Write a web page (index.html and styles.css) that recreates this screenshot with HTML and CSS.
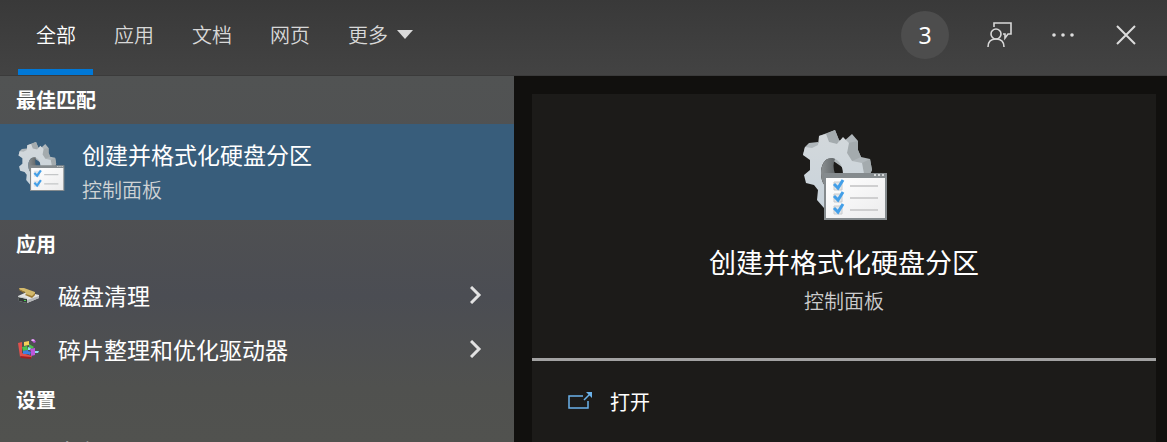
FILE: index.html
```html
<!DOCTYPE html>
<html lang="zh-CN">

<head>
    <meta charset="UTF-8">
    <meta name="viewport" content="width=device-width, initial-scale=1.0">
    <title>搜索</title>
    <link rel="stylesheet" href="styles.css">
</head>

<body>
    <!-- shared gear + checklist icon -->
    <svg class="sprite" aria-hidden="true">
        <defs>
            <linearGradient id="gearFace" x1="0" y1="0" x2="0" y2="1">
                <stop offset="0" stop-color="#d3d8db" />
                <stop offset="1" stop-color="#c8d3db" />
            </linearGradient>
            <linearGradient id="gearHole" x1="0" y1="0" x2="1" y2="0">
                <stop offset="0" stop-color="#8b9092" />
                <stop offset="1" stop-color="#5f6466" />
            </linearGradient>
            <linearGradient id="paper" x1="0" y1="0" x2="1" y2="1">
                <stop offset="0" stop-color="#ffffff" />
                <stop offset="1" stop-color="#ececed" />
            </linearGradient>
        </defs>
        <symbol id="gear" viewBox="0 0 88 92">
            <path fill="#b0b7bb" d="M17 6L33 0L37 10L41 12L50 4L56 11L56 20L59 27L68 29L70 40L68 44H50L30 30L1 25L3 17L7 13L16 12L18 15Z" />
            <path fill="#a4abae" d="M24 4L33 0L37 10L35 14L27 12ZM46 13L56 11L56 20L45 23ZM50 31L59 27L56 20L45 23ZM60 33L68 29L70 40L68 44H62Z" />
            <path fill="url(#gearFace)" fill-rule="evenodd" d="M17 6L24 4L27 12L35 14L41 7L47 13L45 23L50 31L60 33L62 44V60H40V80L22 78L15 70L16 60L12 55L4 53L2 45L8 40V30L1 25L3 17L10 18L16 15ZM29 28C23 28 19 35 19 43C19 53 24 59 30 59C37 59 41 52 41 44C41 35 36 28 29 28Z" />
            <path fill="url(#gearHole)" d="M29 28C23 28 19 35 19 43C19 53 24 59 30 59C37 59 34 52 33 44C31 38 31 33 33 29C32 28 31 28 29 28Z" />
            <path fill="#858b8e" d="M22 43H85V90H22Z" />
            <path fill="url(#paper)" d="M24 48H83V88H24Z" />
            <path fill="#d7dadb" d="M72 44h2v2h-2zM76 44h2v2h-2zM80 44h2v2h-2z" />
        </symbol>
    </svg>

    <div class="search">
        <header class="topbar">
            <nav class="tabs">
                <button class="tab active">全部</button>
                <button class="tab">应用</button>
                <button class="tab">文档</button>
                <button class="tab">网页</button>
                <button class="tab">更多
                    <svg width="16" height="9" viewBox="0 0 16 9"><path fill="#dadada" d="M0 0H16L8 9Z" /></svg>
                </button>
            </nav>
            <div class="actions">
                <button class="points">3</button>
                <button class="action" aria-label="反馈">
                    <svg width="26" height="26" viewBox="0 0 26 26" fill="none" stroke="#d8d8d8" stroke-width="1.6">
                        <path d="M7 5V1H24V12H21L18 16V12H16" />
                        <circle cx="9" cy="12" r="5" />
                        <path d="M1 25C1 20 4 17 9 17S17 20 17 25" />
                    </svg>
                </button>
                <button class="action" aria-label="选项">
                    <svg width="24" height="24" viewBox="0 0 24 24" fill="#dcdcdc">
                        <circle cx="3" cy="12" r="1.8" />
                        <circle cx="12" cy="12" r="1.8" />
                        <circle cx="21" cy="12" r="1.8" />
                    </svg>
                </button>
                <button class="action" aria-label="关闭">
                    <svg width="22" height="22" viewBox="0 0 22 22" fill="none" stroke="#dcdcdc" stroke-width="2"><path d="M2 2L20 20M20 2L2 20" /></svg>
                </button>
            </div>
        </header>

        <main class="content">
            <section class="results">
                <h2 class="group">最佳匹配</h2>
                <button class="best">
                    <svg class="best-icon" viewBox="0 0 88 92">
                        <use href="#gear" width="88" height="92" />
                        <path fill="#e0e4e7" d="M29 53h11v11h-11zM29 71h11v11h-11z" />
                        <path fill="none" stroke="#439fe8" stroke-width="4" d="M30 57L35 62L42 52M30 75L35 80L42 70" />
                        <path stroke="#c4c6c8" stroke-width="2" d="M48 60H74M48 77H74" />
                    </svg>
                    <span class="best-text">
                        <span class="name">创建并格式化硬盘分区</span>
                        <span class="kind">控制面板</span>
                    </span>
                </button>

                <h2 class="group">应用</h2>
                <button class="item">
                    <svg width="22" height="22" viewBox="0 0 22 22">
                        <path fill="#e3e3e3" d="M0 12L9 8L21 11V14L9 19L1 17Z" />
                        <path fill="#b4b6b8" d="M9 16L21 12V14L9 19Z" />
                        <path fill="#343b3a" d="M0 13L9 15V19L1 17Z" />
                        <path fill="#c4c8c8" d="M0 12L9 14V15L0 13Z" />
                        <path fill="#45d04c" d="M6 16h2v1h-2z" />
                        <path fill="#d3b96c" d="M1 4L6 4L17 8V11L14 13L8 10L7 8L2 6Z" />
                        <path fill="#9a7a33" d="M8 10L14 12L17 9V11L14 14L7 11ZM1 5L7 8L6 9L1 6Z" />
                    </svg>
                    <span class="name">磁盘清理</span>
                    <svg class="chevron" width="12" height="18" viewBox="0 0 12 18"><path d="M1 1L9 9L1 17" /></svg>
                </button>
                <button class="item">
                    <svg width="22" height="22" viewBox="0 0 22 22">
                        <path fill="#e0514d" d="M0 5L4 4V15L14 18L13 20L2 19Z" />
                        <path fill="#9f2022" d="M2 18L13 19V21L3 20Z" />
                        <path fill="#f4cf58" d="M6 4L11 3V7L6 8Z" />
                        <path fill="#4cc34c" d="M4 9L9 8L10 12L5 13ZM11 6L16 9L14 11L11 9Z" />
                        <path fill="#3e7fe2" d="M5 13L10 12V16L5 16ZM10 13L13 14L12 17L10 16Z" />
                        <path fill="#8fdcf0" d="M10 9L13 10L12 12L10 12ZM17 13L21 13L20 15L17 15Z" />
                        <path fill="#bd56db" d="M12 11L17 10V17L13 18V14ZM13 2L16 1L18 4L16 5Z" />
                        <path fill="#e9b4f5" d="M13 2L15 1L17 3L14 3Z" />
                    </svg>
                    <span class="name">碎片整理和优化驱动器</span>
                    <svg class="chevron" width="12" height="18" viewBox="0 0 12 18"><path d="M1 1L9 9L1 17" /></svg>
                </button>

                <h2 class="group">设置</h2>
                <button class="item">
                    <svg width="22" height="22" viewBox="0 0 22 22"></svg>
                    <span class="name">备份设置</span>
                </button>
            </section>

            <aside class="preview">
                <div class="card">
                    <div class="summary">
                        <svg class="summary-icon" viewBox="-2 0 88 92">
                            <use href="#gear" width="88" height="92" />
                            <path fill="#e3e6e8" stroke="#c8cacc" d="M32 52h8v8h-8zM32 64h8v8h-8zM32 76h8v8h-8z" />
                            <path fill="none" stroke="#439fe8" stroke-width="3" d="M32 54L36 58L41 50M32 66L36 70L41 62M32 78L36 82L41 74" />
                            <path stroke="#cfcfd0" stroke-width="2" d="M48 56H76M48 68H76M48 80H76" />
                        </svg>
                        <h1 class="title">创建并格式化硬盘分区</h1>
                        <p class="kind">控制面板</p>
                    </div>
                    <button class="open">
                        <svg width="24" height="18" viewBox="0 0 24 18" fill="none" stroke="#6bb2ea" stroke-width="1.5">
                            <path d="M15 4H1V16H20V9M16 8L22 2" />
                            <path fill="#6bb2ea" stroke="none" d="M18 0H24V6Z" />
                        </svg>
                        <span>打开</span>
                    </button>
                </div>
            </aside>
        </main>
    </div>
</body>

</html>
```

FILE: styles.css
```css
* {
    box-sizing: border-box;
}

body {
    margin: 0;
    background-color: #11100e;
    color: white;
    font-family: "Noto Sans CJK SC", sans-serif;
    font-size: 20px;
}

button {
    padding: 0;
    border: none;
    background: none;
    color: inherit;
    font: inherit;
    text-align: left;
    cursor: pointer;
}

h1,
h2,
p {
    margin: 0;
}

svg {
    display: block;
    flex-shrink: 0;
}

.sprite {
    position: absolute;
    width: 0;
    height: 0;
}

.search {
    display: flex;
    flex-direction: column;
    height: 100vh;
    overflow: hidden;
}

/* top bar */
.topbar {
    display: flex;
    flex-shrink: 0;
    justify-content: space-between;
    height: 76px;
    padding: 0 20px 0 18px;
    background: linear-gradient(#393939, #434343);
    border-bottom: 1px solid #3b3b3b;
}

.tabs {
    display: flex;
    gap: 3px;
}

.tab {
    display: flex;
    align-items: center;
    gap: 9px;
    padding: 0 17px 0 18px;
    border-bottom: 6px solid transparent;
    color: #d8d8d8;
    font-weight: 350;
}

.tab.active {
    border-bottom-color: #0078d7;
    color: white;
}

.actions {
    display: flex;
    align-items: center;
    padding-bottom: 5px;
}

.points {
    width: 48px;
    height: 48px;
    margin-right: 26px;
    border-radius: 50%;
    background-color: #4d4d4d;
    font-family: "Noto Sans", sans-serif;
    font-size: 23px;
    text-align: center;
}

.action {
    display: flex;
    align-items: center;
    justify-content: center;
    width: 50px;
    height: 48px;
    margin-right: 13px;
}

.action:last-child {
    margin-right: -4px;
}

/* result list */
.content {
    display: flex;
    flex: 1;
    min-height: 0;
}

.results {
    width: 44.05%;
    overflow: hidden;
    background: linear-gradient(#515353, #4f5052 38%, #4b4d53 60%, #50514f 85%, #51524f);
}

.group {
    padding-left: 16px;
    font-size: 20px;
    line-height: 48px;
}

.best {
    display: flex;
    gap: 16px;
    width: 100%;
    height: 96px;
    padding: 14px 18px;
    background-color: #385d7b;
}

.best-icon {
    width: 48px;
    height: 58px;
}

.best-text {
    display: flex;
    flex-direction: column;
    gap: 4px;
    line-height: 32px;
}

.name {
    font-size: 23px;
}

.kind {
    color: #cfd3d5;
    font-size: 20px;
    font-weight: 350;
}

.item {
    display: flex;
    align-items: center;
    gap: 18px;
    width: 100%;
    height: 54px;
    padding: 0 32px 0 18px;
}

.chevron {
    margin-left: auto;
    fill: none;
    stroke: #e2e2e2;
    stroke-width: 3;
}

/* preview pane */
.preview {
    flex: 1;
    padding: 18px 11px 0 18px;
}

.card {
    height: 100%;
    background-color: #1c1b19;
}

.summary {
    display: flex;
    flex-direction: column;
    align-items: center;
    height: 267px;
    padding-top: 36px;
    border-bottom: 3px solid #a2a2a2;
}

.summary-icon {
    width: 88px;
    height: 92px;
}

.title {
    margin-top: 20px;
    font-size: 27px;
    font-weight: 400;
    line-height: 40px;
}

.summary .kind {
    color: #cccccc;
    line-height: 38px;
}

.open {
    display: flex;
    align-items: center;
    gap: 18px;
    width: 100%;
    height: 80px;
    padding-left: 36px;
}
```
